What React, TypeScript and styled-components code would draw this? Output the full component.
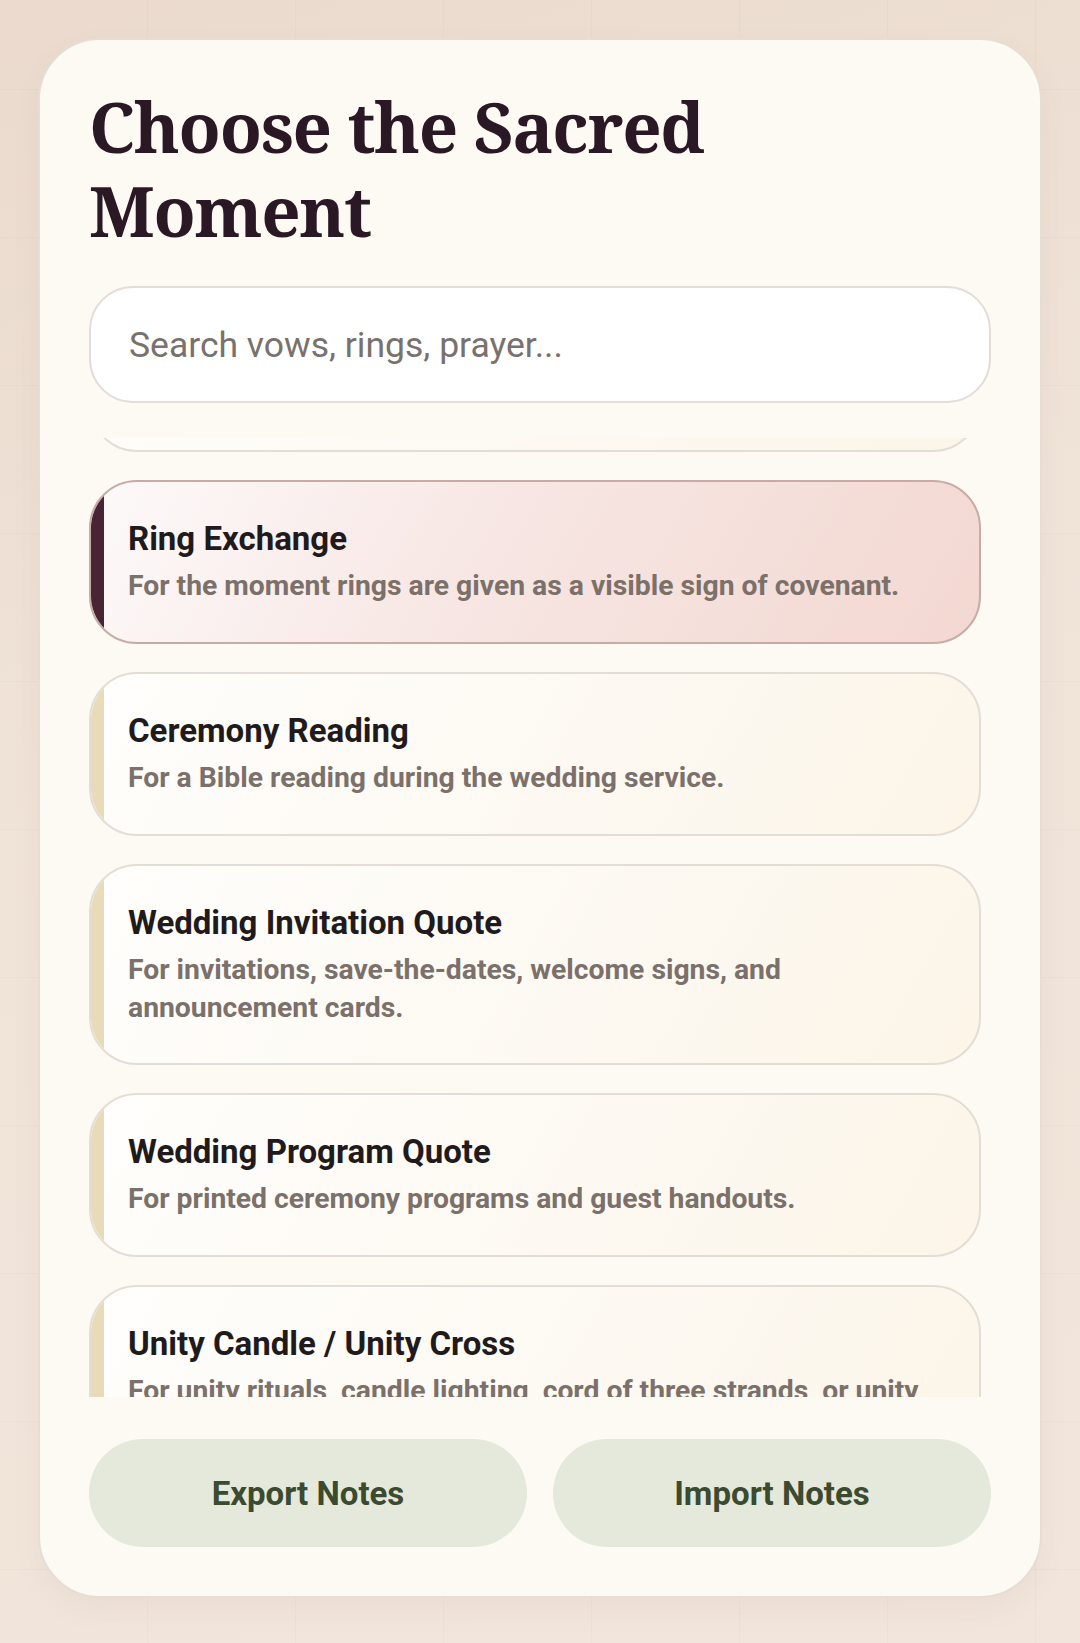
import { useLayoutEffect, useRef } from 'react';
import styled, { createGlobalStyle } from 'styled-components';

const GlobalStyle = createGlobalStyle`
  * {
    box-sizing: border-box;
  }
  html,
  body {
    margin: 0;
    padding: 0;
  }
  body {
    min-height: 100vh;
    font-family: Roboto, 'Noto Sans', 'Liberation Sans', sans-serif;
    background-color: #eee1d6;
    background-image:
      linear-gradient(rgba(150, 115, 90, 0.045) 1px, transparent 1px),
      linear-gradient(90deg, rgba(150, 115, 90, 0.045) 1px, transparent 1px),
      linear-gradient(160deg, #ebdacd 0%, #f0e4d9 45%, #f2e6dc 100%);
    background-size: 148px 148px, 148px 148px, 100% 100%;
    background-position: 0 89px, 147px 0, 0 0;
  }
`;

const Page = styled.main`
  padding: 38px 38px 45px;
`;

const Panel = styled.section`
  height: calc(100vh - 83px);
  display: flex;
  flex-direction: column;
  padding: 44px 49px 49px;
  background: #fdfaf4;
  border: 2px solid #e6ddd4;
  border-radius: 62px;
  box-shadow: 0 12px 30px rgba(120, 80, 60, 0.06);
`;

const Title = styled.h1`
  margin: 0 0 34px;
  font-family: 'Noto Serif', 'DejaVu Serif', 'Liberation Serif', serif;
  font-size: 69px;
  line-height: 84px;
  font-weight: 700;
  letter-spacing: -1.3px;
  color: #2a1824;
`;

const Search = styled.input`
  flex: none;
  width: 100%;
  height: 117px;
  padding: 0 38px;
  border: 2px solid #e3dcd8;
  border-radius: 44px;
  background: #ffffff;
  font-family: Roboto, 'Noto Sans', sans-serif;
  font-size: 35.5px;
  color: #2a1824;
  outline: none;

  &::placeholder {
    color: #78716d;
  }
`;

const List = styled.div`
  position: relative;
  flex: 1;
  min-height: 0;
  margin-top: 35px;
  padding-right: 10px;
  display: flex;
  flex-direction: column;
  gap: 28px;
  overflow-y: auto;
  scrollbar-width: none;

  &::-webkit-scrollbar {
    display: none;
  }
`;

const Moment = styled.button<{ $active?: boolean }>`
  position: relative;
  flex: none;
  display: block;
  width: 100%;
  padding: 37px 40px 37px 37px;
  text-align: left;
  font-family: inherit;
  border-radius: 48px;
  overflow: hidden;
  cursor: pointer;
  border: 2px solid ${(p) => (p.$active ? '#c8aaa7' : '#e3ddd6')};
  background: ${(p) =>
    p.$active
      ? 'linear-gradient(120deg, #fdfafa 0%, #f7e6e3 45%, #f3d8d1 100%)'
      : 'linear-gradient(120deg, #fffefc 0%, #fdf9f2 55%, #fcf5e8 100%)'};

  &::before {
    content: '';
    position: absolute;
    left: 0;
    top: 0;
    bottom: 0;
    width: 13px;
    background: ${(p) => (p.$active ? '#482435' : '#e9dab9')};
  }
`;

const MomentName = styled.div`
  font-size: 33px;
  line-height: 39px;
  font-weight: 700;
  color: #211a1c;
`;

const MomentNote = styled.div`
  margin-top: 9px;
  font-size: 28.3px;
  line-height: 37.7px;
  font-weight: 700;
  color: #7b706a;
`;

const Footer = styled.div`
  flex: none;
  margin-top: 42px;
  display: grid;
  grid-template-columns: 1fr 1fr;
  gap: 26px;
`;

const NotesButton = styled.button`
  height: 108px;
  border: none;
  border-radius: 54px;
  background: #e4e9dc;
  font-family: Roboto, 'Noto Sans', sans-serif;
  font-size: 33px;
  font-weight: 700;
  color: #3c4a30;
  cursor: pointer;
`;

const moments = [
  {
    id: 'vows',
    name: 'Wedding Vows',
    note: 'For the promises spoken between bride and groom.',
  },
  {
    id: 'prayer',
    name: 'Marriage Prayer',
    note: 'For blessing the couple before God and their guests.',
  },
  {
    id: 'rings',
    name: 'Ring Exchange',
    note: 'For the moment rings are given as a visible sign of covenant.',
  },
  {
    id: 'reading',
    name: 'Ceremony Reading',
    note: 'For a Bible reading during the wedding service.',
  },
  {
    id: 'invitation',
    name: 'Wedding Invitation Quote',
    note: 'For invitations, save-the-dates, welcome signs, and announcement cards.',
  },
  {
    id: 'program',
    name: 'Wedding Program Quote',
    note: 'For printed ceremony programs and guest handouts.',
  },
  {
    id: 'unity',
    name: 'Unity Candle / Unity Cross',
    note: 'For unity rituals, candle lighting, cord of three strands, or unity cross moments.',
  },
  {
    id: 'reception',
    name: 'Reception Toast',
    note: 'For toasts, blessings over the meal, and words shared with family.',
  },
];

const App = () => {
  const listRef = useRef<HTMLDivElement>(null);
  const activeRef = useRef<HTMLButtonElement>(null);
  const selected = 'rings';

  // keep the selected moment in view, just under the top of the list
  useLayoutEffect(() => {
    if (listRef.current && activeRef.current) {
      listRef.current.scrollTop = activeRef.current.offsetTop - 42;
    }
  }, []);

  return (
    <>
      <GlobalStyle />
      <Page>
        <Panel>
          <Title>Choose the Sacred Moment</Title>
          <Search type="text" placeholder="Search vows, rings, prayer..." />
          <List ref={listRef}>
            {moments.map((m) => (
              <Moment
                key={m.id}
                type="button"
                $active={m.id === selected}
                ref={m.id === selected ? activeRef : undefined}
              >
                <MomentName>{m.name}</MomentName>
                <MomentNote>{m.note}</MomentNote>
              </Moment>
            ))}
          </List>
          <Footer>
            <NotesButton type="button">Export Notes</NotesButton>
            <NotesButton type="button">Import Notes</NotesButton>
          </Footer>
        </Panel>
      </Page>
    </>
  );
};

export default App;
